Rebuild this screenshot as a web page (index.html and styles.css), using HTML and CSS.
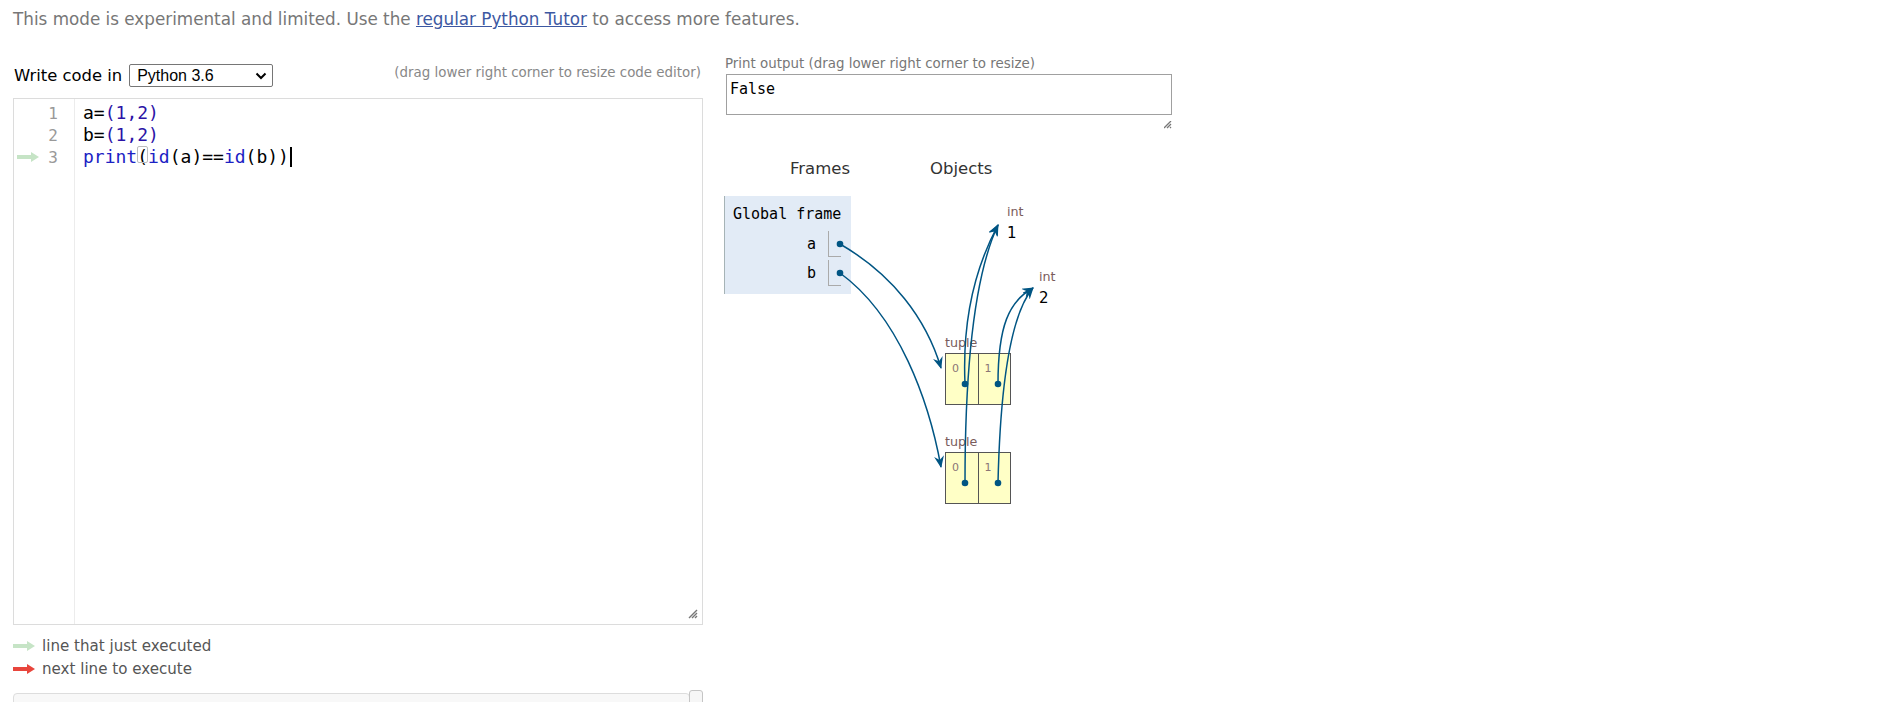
FILE: index.html
```html
<!DOCTYPE html>
<html>
<head>
<meta charset="utf-8">
<title>Python Tutor</title>
<link rel="stylesheet" href="styles.css">
</head>
<body>
<div class="notice">This mode is experimental and limited. Use the <a href="#">regular Python Tutor</a> to access more features.</div>
<div class="main">
  <div class="left">
    <div class="ed-head">
      <span class="write">Write code in</span>
      <div class="select"><span>Python 3.6</span><svg class="chev" width="12" height="8" viewBox="0 0 12 8"><path d="M1.5 1.5 L6 6 L10.5 1.5" fill="none" stroke="#000" stroke-width="2"/></svg></div>
      <span class="hint">(drag lower right corner to resize code editor)</span>
    </div>
    <div class="editor">
      <div class="gutter">
        <div class="gl">1</div>
        <div class="gl">2</div>
        <div class="gl"><svg class="garrow" width="22" height="10" viewBox="0 0 22 10"><path d="M0 3 H14 V0 L22 5 L14 10 V7 H0 Z" fill="#c6e4c6"/></svg>3</div>
      </div>
      <div class="code">
        <div class="cl">a=<span class="p">(</span><span class="n">1</span><span class="p">,</span><span class="n">2</span><span class="p">)</span></div>
        <div class="cl">b=<span class="p">(</span><span class="n">1</span><span class="p">,</span><span class="n">2</span><span class="p">)</span></div>
        <div class="cl"><span class="k">print</span><span class="bm">(</span><span class="k">id</span>(a)==<span class="k">id</span>(b))<span class="cursor"></span></div>
      </div>
      <svg class="grip" width="10" height="10" viewBox="0 0 10 10"><path d="M9 1 L1 9 M9 4 L4 9 M9 7 L7 9" stroke="#777" stroke-width="1.4"/></svg>
    </div>
    <div class="legend">
      <div class="lg"><svg width="22" height="10" viewBox="0 0 22 10"><path d="M0 3 H14 V0 L22 5 L14 10 V7 H0 Z" fill="#c6e4c6"/></svg><span>line that just executed</span></div>
      <div class="lg"><svg width="22" height="10" viewBox="0 0 22 10"><path d="M0 3 H14 V0 L22 5 L14 10 V7 H0 Z" fill="#e8453c"/></svg><span>next line to execute</span></div>
    </div>
    <div class="slider"><div class="handle"></div></div>
  </div>
  <div class="right">
    <div class="out-label">Print output (drag lower right corner to resize)</div>
    <div class="output">False</div>
    <div class="out-grip"><svg width="8" height="8" viewBox="0 0 8 8"><path d="M7 0 L0 7 M7 3 L3 7 M7 6 L6 7" stroke="#777" stroke-width="1.3"/></svg></div>
    <div class="viz-head"><span class="h-frames">Frames</span><span class="h-objects">Objects</span></div>
    <div class="canvas">
      <div class="frame">
        <div class="ftitle">Global frame</div>
        <div class="vr first"><span class="vn">a</span><span class="vv"></span></div>
        <div class="vr"><span class="vn">b</span><span class="vv"></span></div>
      </div>
      <div class="hobj int1"><div class="tlabel">int</div><div class="prim">1</div></div>
      <div class="hobj int2"><div class="tlabel">int</div><div class="prim">2</div></div>
      <div class="hobj tup1"><div class="tlabel">tuple</div><div class="tbox"><div class="cell"><span class="idx">0</span></div><div class="cell"><span class="idx">1</span></div></div></div>
      <div class="hobj tup2"><div class="tlabel">tuple</div><div class="tbox"><div class="cell"><span class="idx">0</span></div><div class="cell"><span class="idx">1</span></div></div></div>
      <svg class="arrows" width="420" height="320" viewBox="0 0 420 320">
        <defs>
          <marker id="ah" viewBox="0 0 12 10" refX="11" refY="5" markerWidth="12" markerHeight="10" orient="auto" markerUnits="userSpaceOnUse">
            <path d="M0 0 L12 5 L0 10 L4 5 Z" fill="#005583"/>
          </marker>
        </defs>
        <g fill="none" stroke="#005583" stroke-width="1.5">
          <path d="M116 48 C168 78 202 122 217 172" marker-end="url(#ah)"/>
          <path d="M116 77 C175 120 205 205 217 271" marker-end="url(#ah)"/>
          <path d="M241 188 C238 120 252 70 274 29" marker-end="url(#ah)"/>
          <path d="M241 287 C241 170 250 80 274 29" marker-end="url(#ah)"/>
          <path d="M274 188 C274 130 285 105 309 92" marker-end="url(#ah)"/>
          <path d="M274 287 C276 200 285 120 309 92" marker-end="url(#ah)"/>
        </g>
        <g fill="#005583">
          <circle cx="116" cy="48" r="3.3"/>
          <circle cx="116" cy="77" r="3.3"/>
          <circle cx="241" cy="188" r="3.3"/>
          <circle cx="274" cy="188" r="3.3"/>
          <circle cx="241" cy="287" r="3.3"/>
          <circle cx="274" cy="287" r="3.3"/>
        </g>
      </svg>
    </div>
  </div>
</div>
</body>
</html>
```
FILE: styles.css
```css
body {
  margin: 0;
  font-family: "DejaVu Sans", Verdana, sans-serif;
  color: #000;
  background: #fff;
}
.notice {
  padding: 8px 0 0 13px;
  font-size: 16.8px;
  line-height: 22px;
  color: #777;
}
.notice a {
  color: #3d58a2;
  text-decoration: underline;
}
.main {
  display: flex;
  margin-top: 26px;
}
.left {
  width: 690px;
  margin-left: 13px;
  padding-top: 8px;
}
.ed-head {
  display: flex;
  align-items: center;
  height: 23px;
  margin-bottom: 11px;
}
.write {
  font-size: 16.4px;
  margin-left: 1px;
  margin-right: 7px;
}
.select {
  width: 144px;
  height: 23px;
  box-sizing: border-box;
  border: 1px solid #767676;
  border-radius: 2px;
  display: flex;
  align-items: center;
  justify-content: space-between;
  padding: 0 5px 0 7px;
  font-family: "Liberation Sans", Arial, sans-serif;
  font-size: 16px;
}
.hint {
  margin-left: auto;
  margin-right: 2px;
  align-self: flex-start;
  margin-top: 1px;
  font-size: 13.4px;
  line-height: 16px;
  color: #888;
}
.editor {
  position: relative;
  height: 527px;
  box-sizing: border-box;
  border: 1px solid #dcdcdc;
  display: flex;
}
.gutter {
  width: 60px;
  border-right: 1px solid #ececec;
  padding-top: 3px;
  font-family: "DejaVu Sans Mono", monospace;
  font-size: 16px;
  color: #999;
}
.gl {
  height: 22px;
  display: flex;
  align-items: center;
  justify-content: flex-end;
  padding-right: 16px;
}
.garrow {
  margin-left: 3px;
  margin-right: auto;
}
.code {
  padding-left: 8px;
  padding-top: 3px;
  font-family: "DejaVu Sans Mono", monospace;
  font-size: 18px;
  line-height: 22px;
}
.cl {
  height: 22px;
  white-space: pre;
}
.k { color: #1c22c4; }
.n { color: #2b13a6; }
.p { color: #2b13a6; }
.bm { position: relative; }
.bm::before {
  content: "";
  position: absolute;
  left: 0;
  right: 0;
  top: 0;
  bottom: 4px;
  border: 1px solid #bdbdbd;
  border-radius: 2px;
}
.cursor {
  display: inline-block;
  width: 2px;
  height: 20px;
  background: #000;
  vertical-align: -4px;
  margin-left: 1px;
}
.grip {
  position: absolute;
  right: 4px;
  bottom: 5px;
}
.legend {
  margin-top: 9px;
  font-size: 15.1px;
  color: #555;
}
.lg {
  display: flex;
  align-items: center;
  height: 23px;
}
.lg svg {
  margin-right: 7px;
}
.slider {
  position: relative;
  margin-top: 13px;
  width: 677px;
  height: 20px;
  box-sizing: border-box;
  border: 1px solid #dddddd;
  border-radius: 4px;
  background: #f8f8f8;
}
.handle {
  position: absolute;
  right: -14px;
  top: -4px;
  width: 12px;
  height: 22px;
  border: 1px solid #c5c5c5;
  border-radius: 3px;
  background: #f6f6f6;
}
.right {
  margin-left: 21px;
}
.out-label {
  margin-left: 1px;
  margin-bottom: 2px;
  font-size: 13.4px;
  line-height: 16px;
  color: #777;
}
.output {
  margin-left: 2px;
  width: 446px;
  height: 41px;
  box-sizing: border-box;
  border: 1px solid #a0a0a0;
  padding: 5px 3px;
  font-family: "DejaVu Sans Mono", monospace;
  font-size: 15px;
  line-height: 18px;
}
.out-grip {
  width: 448px;
  height: 14px;
  display: flex;
  justify-content: flex-end;
  align-items: flex-end;
}
.viz-head {
  display: flex;
  margin-top: 30px;
  font-size: 16.5px;
  line-height: 20px;
  color: #333;
}
.h-frames { margin-left: 66px; }
.h-objects { margin-left: 80px; }
.canvas {
  position: relative;
  margin-top: 17px;
  width: 420px;
  height: 320px;
}
.frame {
  width: 127px;
  height: 98px;
  box-sizing: border-box;
  background: #e2ebf6;
  border-left: 1px solid #a6b3b6;
  padding: 9px 10px 0 8px;
}
.ftitle {
  font-family: "DejaVu Sans Mono", monospace;
  font-size: 15px;
  line-height: 18px;
  white-space: nowrap;
}
.vr {
  display: flex;
  justify-content: flex-end;
  align-items: center;
  height: 26px;
  margin-top: 3px;
}
.vr.first { margin-top: 8px; }
.vn {
  font-family: "DejaVu Sans Mono", monospace;
  font-size: 15px;
  margin-right: 12px;
}
.vv {
  width: 13px;
  height: 26px;
  box-sizing: border-box;
  border-left: 1px solid #aaa;
  border-bottom: 1px solid #aaa;
}
.hobj {
  position: absolute;
}
.tlabel {
  font-size: 12.7px;
  line-height: 16px;
  color: #7a5c5c;
}
.prim {
  margin-top: 4px;
  font-size: 15px;
  line-height: 18px;
}
.int1 { left: 283px; top: 8px; }
.int2 { left: 315px; top: 73px; }
.tup1 { left: 221px; top: 139px; }
.tup2 { left: 221px; top: 238px; }
.tbox {
  margin-top: 2px;
  display: flex;
  width: 66px;
  height: 52px;
  box-sizing: border-box;
  border: 1px solid #555;
}
.cell {
  flex: 1;
  background: #ffffc6;
  padding: 3px 0 0 6px;
}
.cell + .cell {
  border-left: 1px solid #555;
}
.idx {
  font-size: 11px;
  line-height: 14px;
  color: #8a7676;
}
.arrows {
  position: absolute;
  left: 0;
  top: 0;
  overflow: visible;
  pointer-events: none;
}
```
